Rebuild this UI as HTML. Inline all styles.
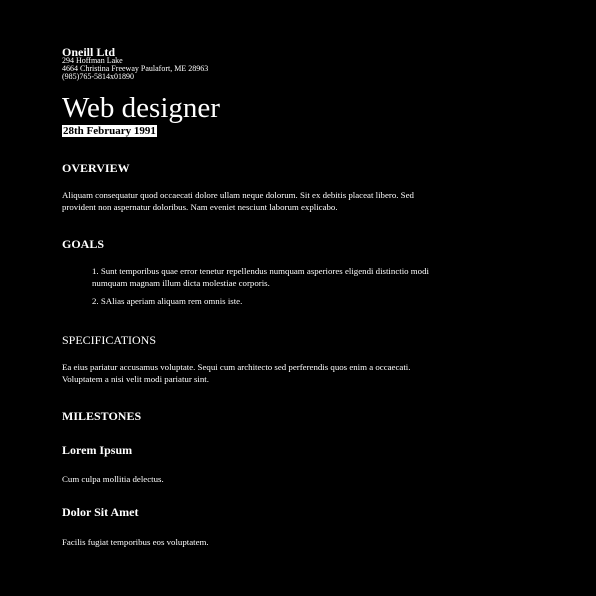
<!DOCTYPE html>
<html><head><meta charset="utf-8"><style>
body{margin:0;background:#000;color:#fff;font-family:"Liberation Serif",serif;width:596px;height:596px;overflow:hidden;position:relative}
div{position:absolute;left:62px;white-space:nowrap}
.h{font-weight:bold;font-size:12px;line-height:14px}
.p{font-size:8.85px;line-height:12px}
</style></head><body>
<div class="h" style="top:45px">Oneill Ltd</div>
<div style="top:57px;font-size:8px;line-height:8px">294 Hoffman Lake<br>4664 Christina Freeway Paulafort, ME 28963<br>(985)765-5814x01890</div>
<div style="top:91px;font-size:29px;line-height:34px">Web designer</div>
<div style="top:125px;font-size:11px;line-height:12px;font-weight:bold;background:#fff;color:#000;padding:0 1px">28th February 1991</div>
<div class="h" style="top:161px">OVERVIEW</div>
<div class="p" style="top:189px">Aliquam consequatur quod occaecati dolore ullam neque dolorum. Sit ex debitis placeat libero. Sed<br>provident non aspernatur doloribus. Nam eveniet nesciunt laborum explicabo.</div>
<div class="h" style="top:237px">GOALS</div>
<div class="p" style="top:265px;left:92px">1. Sunt temporibus quae error tenetur repellendus numquam asperiores eligendi distinctio modi<br>numquam magnam illum dicta molestiae corporis.</div>
<div class="p" style="top:295px;left:92px">2. SAlias aperiam aliquam rem omnis iste.</div>
<div style="top:333px;font-size:12px;line-height:14px">SPECIFICATIONS</div>
<div class="p" style="top:361px">Ea eius pariatur accusamus voluptate. Sequi cum architecto sed perferendis quos enim a occaecati.<br>Voluptatem a nisi velit modi pariatur sint.</div>
<div class="h" style="top:409px">MILESTONES</div>
<div class="h" style="top:443px">Lorem Ipsum</div>
<div class="p" style="top:473px">Cum culpa mollitia delectus.</div>
<div class="h" style="top:505px">Dolor Sit Amet</div>
<div class="p" style="top:536px">Facilis fugiat temporibus eos voluptatem.</div>
</body></html>
